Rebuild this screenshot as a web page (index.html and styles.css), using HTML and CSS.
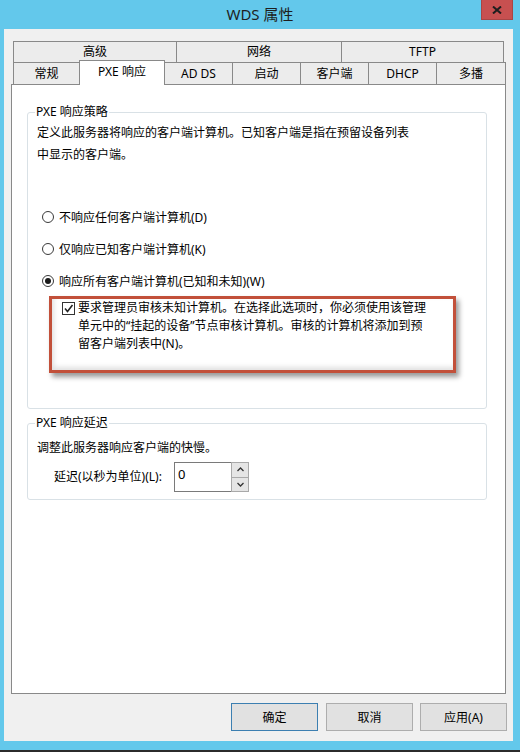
FILE: index.html
```html
<!DOCTYPE html>
<html lang="zh-CN">
<head>
    <meta charset="UTF-8">
    <meta name="viewport" content="width=device-width, initial-scale=1.0">
    <title>WDS 属性</title>
    <link rel="stylesheet" href="styles.css">
</head>
<body>
    <div class="window">
        <div class="titlebar">
            <span class="title">WDS 属性</span>
            <div class="close">
                <svg width="10" height="8" viewBox="0 0 10 8"><path d="M1 0.5 L9 7.5 M9 0.5 L1 7.5" stroke="#1e1e1e" stroke-width="2" fill="none"/></svg>
            </div>
        </div>

        <div class="client">
            <div class="tabs">
                <div class="tab-row row-top">
                    <div class="tab w-164">高级</div>
                    <div class="tab w-166">网络</div>
                    <div class="tab w-163">TFTP</div>
                </div>
                <div class="tab-row row-bottom">
                    <div class="tab w-67">常规</div>
                    <div class="tab w-86 selected">PXE 响应</div>
                    <div class="tab w-69">AD DS</div>
                    <div class="tab w-69">启动</div>
                    <div class="tab w-69">客户端</div>
                    <div class="tab w-69">DHCP</div>
                    <div class="tab w-70">多播</div>
                </div>
            </div>

            <div class="panel">
                <fieldset class="group group-policy">
                    <legend>PXE 响应策略</legend>
                    <p class="desc">定义此服务器将响应的客户端计算机。已知客户端是指在预留设备列表<br>中显示的客户端。</p>

                    <div class="options">
                        <div class="radio-row"><span class="radio"></span>不响应任何客户端计算机(D)</div>
                        <div class="radio-row"><span class="radio"></span>仅响应已知客户端计算机(K)</div>
                        <div class="radio-row"><span class="radio on"></span>响应所有客户端计算机(已知和未知)(W)</div>
                    </div>

                    <div class="check-row">
                        <span class="checkbox">
                            <svg width="11" height="11" viewBox="0 0 11 11"><path d="M2 5.5 L4.5 8.5 L9.5 2" stroke="#222" stroke-width="1.6" fill="none"/></svg>
                        </span>
                        <p class="check-text">要求管理员审核未知计算机。在选择此选项时，你必须使用该管理<br>单元中的“挂起的设备”节点审核计算机。审核的计算机将添加到预<br>留客户端列表中(N)。</p>
                        <div class="highlight"></div>
                    </div>
                </fieldset>

                <fieldset class="group group-delay">
                    <legend>PXE 响应延迟</legend>
                    <p class="delay-desc">调整此服务器响应客户端的快慢。</p>
                    <div class="spin-row">
                        <span class="spin-label">延迟(以秒为单位)(L):</span>
                        <div class="spin">
                            <div class="spin-input">0</div>
                            <div class="spin-buttons">
                                <div class="spin-btn">
                                    <svg width="7" height="5" viewBox="0 0 7 5"><path d="M0.5 4 L3.5 1 L6.5 4" stroke="#333" stroke-width="1.3" fill="none"/></svg>
                                </div>
                                <div class="spin-btn">
                                    <svg width="7" height="5" viewBox="0 0 7 5"><path d="M0.5 1 L3.5 4 L6.5 1" stroke="#333" stroke-width="1.3" fill="none"/></svg>
                                </div>
                            </div>
                        </div>
                    </div>
                </fieldset>
            </div>

            <div class="actions">
                <button class="btn primary">确定</button>
                <button class="btn">取消</button>
                <button class="btn">应用(A)</button>
            </div>
        </div>
    </div>
</body>
</html>
```

FILE: styles.css
```css
* {
    margin: 0;
    padding: 0;
    box-sizing: border-box;
}

body {
    width: 520px;
    height: 752px;
    overflow: hidden;
    background: #63c8eb;
    font-family: "Noto Sans", "Noto Sans CJK SC", sans-serif;
    font-size: 12px;
    color: #000;
}

.window {
    height: 752px;
    display: flex;
    flex-direction: column;
    border-bottom: 2px solid #2b2b2b;
}

/* Title bar */
.titlebar {
    height: 29px;
    flex: none;
    display: grid;
    grid-template-columns: 1fr auto 1fr;
    align-items: start;
}

.title {
    grid-column: 2;
    font-size: 15px;
    line-height: 29px;
    color: #1e1e1e;
}

.close {
    grid-column: 3;
    justify-self: end;
    margin-right: 7px;
    width: 32px;
    height: 20px;
    background: #c75050;
    border: 1px solid #a84545;
    border-top: none;
    display: flex;
    align-items: center;
    justify-content: center;
}

/* Client area */
.client {
    height: 712px;
    flex: none;
    margin: 0 7px 0 4px;
    background: #f0f0f0;
    padding-top: 12px;
    display: flex;
    flex-direction: column;
}

/* Tabs */
.tab-row {
    display: flex;
    align-items: flex-start;
    margin-left: 9px;
}

.tab {
    border: 1px solid #898989;
    border-bottom: none;
    margin-right: -1px;
    background: #ececec;
    text-align: center;
    white-space: nowrap;
}

.row-top .tab {
    height: 21px;
    line-height: 20px;
}

.row-bottom .tab {
    height: 22px;
    line-height: 21px;
}

.row-bottom .tab.selected {
    position: relative;
    z-index: 1;
    height: 25px;
    margin-top: -2px;
    margin-bottom: -1px;
    line-height: 21px;
    background: #fff;
}

.w-164 { width: 164px; }
.w-166 { width: 166px; }
.w-163 { width: 163px; }
.w-67 { width: 67px; }
.w-86 { width: 86px; }
.w-69 { width: 69px; }
.w-70 { width: 70px; }

/* Tab page */
.panel {
    width: 495px;
    height: 610px;
    margin-left: 7px;
    background: #fff;
    border: 1px solid #898989;
    padding: 19px 0 0 15px;
}

.group {
    width: 460px;
    border: 1px solid #d9e1e6;
    border-radius: 3px;
    padding: 0 9px;
}

.group legend {
    padding: 0 1px;
    margin-left: -2px;
    line-height: 16px;
}

.group-policy {
    padding-bottom: 55px;
}

.desc {
    margin-top: 2px;
    line-height: 22px;
}

.options {
    margin-top: 35px;
}

.radio-row {
    height: 32px;
    display: flex;
    align-items: center;
    gap: 5px;
    padding-left: 5px;
}

.radio {
    width: 12px;
    height: 12px;
    flex: none;
    border: 1px solid #3a3a3a;
    border-radius: 50%;
    background: #fff;
    display: flex;
    align-items: center;
    justify-content: center;
}

.radio.on::after {
    content: '';
    width: 6px;
    height: 6px;
    border-radius: 50%;
    background: #1a1a1a;
}

.check-row {
    position: relative;
    margin-top: 2px;
    margin-left: 25px;
    display: flex;
    align-items: flex-start;
    gap: 3px;
}

.checkbox {
    width: 13px;
    height: 13px;
    flex: none;
    margin-top: 3px;
    border: 1px solid #333;
    background: #fff;
    display: flex;
    align-items: center;
    justify-content: center;
}

.check-text {
    line-height: 18px;
    white-space: nowrap;
}

/* red annotation frame drawn over the option */
.highlight {
    position: absolute;
    left: -13px;
    top: -3px;
    width: 407px;
    height: 77px;
    border: 3px solid #c2503a;
    box-shadow: 3px 4px 5px rgba(0, 0, 0, 0.4), inset 2px -3px 5px rgba(0, 0, 0, 0.12);
    pointer-events: none;
}

.group-delay {
    margin-top: 6px;
    padding-bottom: 7px;
}

.delay-desc {
    margin-top: 8px;
    line-height: 18px;
}

.spin-row {
    margin-top: 5px;
    display: flex;
    align-items: center;
    padding-left: 17px;
}

.spin-label {
    width: 120px;
    line-height: 18px;
}

.spin {
    width: 75px;
    height: 30px;
    display: flex;
}

.spin-input {
    flex: 1;
    border: 1px solid #7a7a7a;
    border-right: none;
    background: #fff;
    padding: 2px 0 0 3px;
    line-height: 18px;
    font-size: 13px;
}

.spin-buttons {
    width: 18px;
    display: flex;
    flex-direction: column;
    border: 1px solid #a9a9a9;
    background: #a9a9a9;
    gap: 1px;
}

.spin-btn {
    flex: 1;
    background: #e5e5e5;
    display: flex;
    align-items: center;
    justify-content: center;
}

/* Dialog buttons */
.actions {
    margin-top: 9px;
    display: flex;
    justify-content: flex-end;
    padding-right: 6px;
}

.btn {
    width: 87px;
    height: 28px;
    margin-left: 8px;
    background: #e1e1e1;
    border: 1px solid #adadad;
    font-family: inherit;
    font-size: 12px;
    color: #000;
}

.btn + .btn + .btn {
    margin-left: 7px;
}

.btn.primary {
    border-color: #3c7fb1;
}
```
